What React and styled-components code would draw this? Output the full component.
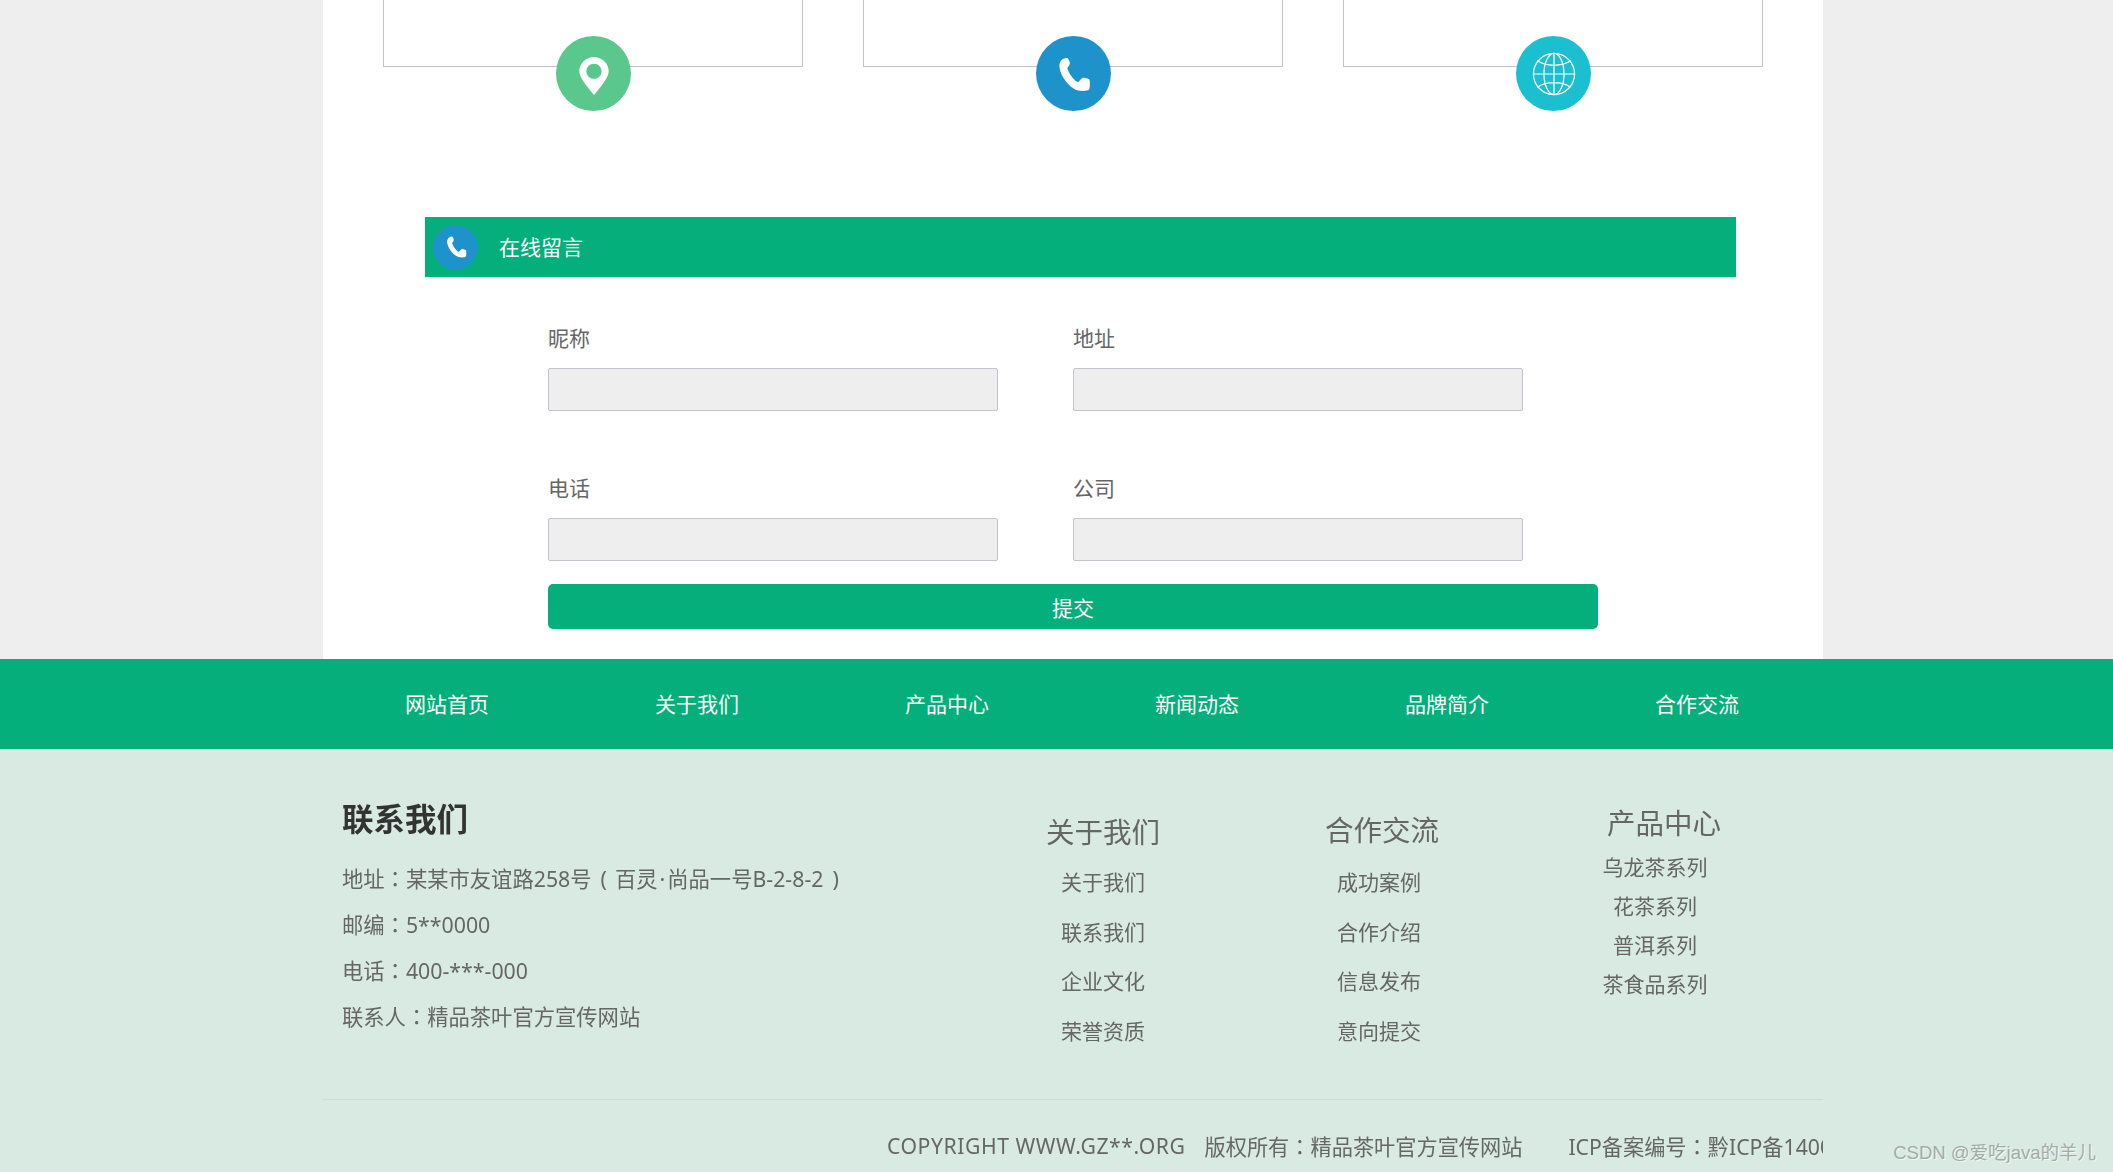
import React from "react";
import styled, { createGlobalStyle } from "styled-components";

const GREEN = "#04af7b";
const FONT = `"Noto Sans", "Noto Sans CJK SC", sans-serif`;

const GlobalStyle = createGlobalStyle`
  html, body {
    margin: 0;
    height: 1172px;
    overflow: hidden;
    background: #eeeeee;
    font-family: ${FONT};
  }
`;

const Page = styled.div`
  position: relative;
  width: 2113px;
  height: 1172px;
  overflow: hidden;
`;

const Main = styled.main`
  margin-left: 323px;
  width: 1500px;
  height: 659px;
  background: #fff;
`;

const Cards = styled.div`
  display: flex;
  gap: 60px;
  padding-left: 60px;
`;

const Card = styled.div`
  position: relative;
  box-sizing: border-box;
  width: 420px;
  height: 67px;
  border: 1px solid #c4c1d0;
  border-top: none;
`;

const Badge = styled.div`
  position: absolute;
  left: 172px;
  bottom: -45px;
  width: 75px;
  height: 75px;
  border-radius: 50%;
  background: ${p => p.$color};
  display: flex;
  align-items: center;
  justify-content: center;
`;

const Bar = styled.div`
  display: flex;
  align-items: center;
  gap: 21px;
  margin: 150px 0 0 102px;
  padding-left: 8px;
  width: 1303px;
  height: 60px;
  background: ${GREEN};
  color: #fff;
  font-size: 21px;
`;

const BarTitle = styled.span`
  margin-bottom: 2px;
`;

const SmallBadge = styled.div`
  width: 45px;
  height: 45px;
  border-radius: 50%;
  background: #1e92cb;
  display: flex;
  align-items: center;
  justify-content: center;
`;

const Form = styled.form`
  margin: 46px 0 0 225px;
  width: 1050px;
`;

const Fields = styled.div`
  display: grid;
  grid-template-columns: 450px 450px;
  column-gap: 75px;
  row-gap: 62px;
`;

const Field = styled.label`
  display: flex;
  flex-direction: column;
  gap: 15px;
  font-size: 21px;
  line-height: 30px;
  color: #666;
`;

const Input = styled.input`
  box-sizing: border-box;
  width: 450px;
  height: 43px;
  background: #eeeeee;
  border: 1px solid #c4c1d0;
  border-radius: 2px;
`;

const Submit = styled.button`
  display: block;
  margin-top: 23px;
  width: 1050px;
  height: 45px;
  border: none;
  border-radius: 5px;
  background: ${GREEN};
  color: #fff;
  font-family: inherit;
  font-size: 21px;
`;

const Nav = styled.nav`
  display: flex;
  height: 90px;
  padding-left: 322px;
  background: ${GREEN};
`;

const NavItem = styled.a`
  width: 250px;
  line-height: 90px;
  text-align: center;
  color: #fff;
  font-size: 21px;
`;

const Footer = styled.footer`
  height: 423px;
  background: #d8eae2;
`;

const FooterInner = styled.div`
  margin-left: 323px;
  width: 1500px;
  filter: blur(0.6px);
`;

const FooterTop = styled.div`
  box-sizing: border-box;
  display: flex;
  height: 351px;
  padding-left: 19px;
  border-bottom: 1px solid #cadfd5;
`;

const Contact = styled.div`
  width: 704px;
  padding-top: 50px;
`;

const ContactTitle = styled.h3`
  margin: 0 0 16px;
  font-size: 31.5px;
  line-height: 40px;
  font-weight: 700;
  color: #333;
`;

const ContactLine = styled.p`
  margin: 0;
  height: 46px;
  font-size: 21.3px;
  line-height: 46px;
  color: #666;
  white-space: nowrap;
`;

/* the footer picture sets its punctuation centred in the em box */
const Punct = styled.span`
  font-family: "Noto Sans CJK TC", sans-serif;
`;

const Paren = styled.span`
  margin: 0 8px 0 9px;
`;

const Dot = styled.span`
  margin: 0 ${p => p.$space}px;
`;

const LinkColumn = styled.div`
  width: ${p => p.$width}px;
  padding-top: ${p => p.$top}px;
`;

const ColumnTitle = styled.h4`
  margin: 0 0 ${p => p.$gap}px;
  width: 114px;
  text-align: center;
  font-size: 28.5px;
  line-height: 40px;
  font-weight: 400;
  color: #666;
`;

const ColumnLink = styled.div`
  width: 114px;
  margin-left: ${p => p.$shift}px;
  text-align: center;
  font-size: 21px;
  line-height: ${p => p.$height}px;
  color: #666;
`;

const Copyright = styled.div`
  display: flex;
  height: 43px;
  padding: 29px 0 0 564px;
  font-size: 21.2px;
  line-height: 34px;
  color: #666;
  white-space: nowrap;
  overflow: hidden;
`;

const CopyPart = styled.span`
  margin-right: ${p => p.$gap}px;
  letter-spacing: ${p => p.$spacing || 0}px;
`;

const Watermark = styled.div`
  position: absolute;
  right: 17px;
  bottom: 6px;
  font-family: "Liberation Sans", "Noto Sans CJK SC", sans-serif;
  font-size: 18.5px;
  line-height: 26px;
  color: #a3aba7;
  text-shadow: 1px 1px 0 #f2f7f4;
`;

const IconShift = styled.div`
  display: flex;
  margin-top: ${p => p.$top}px;
`;

const PhoneIcon = ({ size }) => (
  <svg width={size} height={size} viewBox="0 0 36 36" fill="#fff">
    <path d="M8.5 1.5 C6 2 3.5 5 3.5 9 C3.5 17 10 27 18 32.5 C21 34.5 24 35 27.5 35 C30.5 35 33 34.5 34 33.5 C35 32 35 27 34.5 23.5 C34 22.5 32 22 30 21.5 C28 21 26.5 21.5 25.5 23 L23.5 25.5 C22.5 26 21 25.5 19.5 24 C16 20.5 13 15.5 12 12.5 C11.5 11 12 10.5 13 9.5 C14 8.5 14.5 7 14 5 C13.5 3 12.5 1 11 1 C10 1 9.5 1.2 8.5 1.5 Z" />
  </svg>
);

const PinIcon = () => (
  <svg width="30" height="38" viewBox="0 0 31 40">
    <path fill="#fff" fillRule="evenodd" d="M15.5 0 C7 0 0 6.8 0 15 C0 22 10 33.5 15.5 40 C21 33.5 31 22 31 15 C31 6.8 24 0 15.5 0 Z M15.5 7 C20 7 23.5 10.6 23.5 15 C23.5 19.4 20 23 15.5 23 C11 23 7.5 19.4 7.5 15 C7.5 10.6 11 7 15.5 7 Z" />
  </svg>
);

const GlobeIcon = () => (
  <svg width="44" height="44" viewBox="0 0 46 46" fill="none" stroke="#fff" strokeWidth="1.3">
    <circle cx="23" cy="23" r="21.5" />
    <ellipse cx="23" cy="23" rx="10.5" ry="21.5" />
    <path d="M23 1.5 V44.5 M1.5 23 H44.5 M5.5 9 C14 15.5 32 15.5 40.5 9 M5.5 37 C14 30.5 32 30.5 40.5 37" />
  </svg>
);

const cards = [
  { color: "#5ac78c", shift: 4, icon: <PinIcon /> },
  { color: "#1e92cb", shift: 2, icon: <PhoneIcon size={35} /> },
  { color: "#1ac0d0", shift: 1, icon: <GlobeIcon /> }
];

const navItems = ["网站首页", "关于我们", "产品中心", "新闻动态", "品牌简介", "合作交流"];

const columns = [
  { title: "关于我们", width: 279, top: 63, gap: 6, shift: 0, height: 49.5, links: ["关于我们", "联系我们", "企业文化", "荣誉资质"] },
  { title: "合作交流", width: 282, top: 61, gap: 8, shift: -3, height: 49.5, links: ["成功案例", "合作介绍", "信息发布", "意向提交"] },
  { title: "产品中心", width: 200, top: 54, gap: 5, shift: -9, height: 39, links: ["乌龙茶系列", "花茶系列", "普洱系列", "茶食品系列"] }
];

export default function App() {
  return (
    <Page>
      <GlobalStyle />
      <Main>
        <Cards>
          {cards.map((card, index) => (
            <Card key={index}>
              <Badge $color={card.color}>
                <IconShift $top={card.shift}>{card.icon}</IconShift>
              </Badge>
            </Card>
          ))}
        </Cards>
        <Bar>
          <SmallBadge><PhoneIcon size={22} /></SmallBadge>
          <BarTitle>在线留言</BarTitle>
        </Bar>
        <Form>
          <Fields>
            {["昵称", "地址", "电话", "公司"].map(label => (
              <Field key={label}>
                {label}
                <Input type="text" />
              </Field>
            ))}
          </Fields>
          <Submit type="button">提交</Submit>
        </Form>
      </Main>
      <Nav>
        {navItems.map(item => <NavItem key={item}>{item}</NavItem>)}
      </Nav>
      <Footer>
        <FooterInner>
          <FooterTop>
            <Contact>
              <ContactTitle>联系我们</ContactTitle>
              <ContactLine>
                地址<Punct>：</Punct>某某市友谊路258号<Paren>(</Paren>百灵<Dot $space={2}>·</Dot>尚品一号B-2-8-2<Paren>)</Paren>
              </ContactLine>
              <ContactLine>邮编<Punct>：</Punct>5**0000</ContactLine>
              <ContactLine>电话<Punct>：</Punct>400-***-000</ContactLine>
              <ContactLine>联系人<Punct>：</Punct>精品茶叶官方宣传网站</ContactLine>
            </Contact>
            {columns.map(col => (
              <LinkColumn key={col.title} $width={col.width} $top={col.top}>
                <ColumnTitle $gap={col.gap}>{col.title}</ColumnTitle>
                {col.links.map(link => (
                  <ColumnLink key={link} $shift={col.shift} $height={col.height}>{link}</ColumnLink>
                ))}
              </LinkColumn>
            ))}
          </FooterTop>
          <Copyright>
            <CopyPart $gap={19} $spacing={0.55}>COPYRIGHT WWW.GZ**.ORG</CopyPart>
            <CopyPart $gap={46}>版权所有<Punct>：</Punct>精品茶叶官方宣传网站</CopyPart>
            <CopyPart $gap={0}>ICP备案编号<Punct>：</Punct>黔ICP备14000000号</CopyPart>
          </Copyright>
        </FooterInner>
      </Footer>
      <Watermark>CSDN @爱吃java的羊儿</Watermark>
    </Page>
  );
}
